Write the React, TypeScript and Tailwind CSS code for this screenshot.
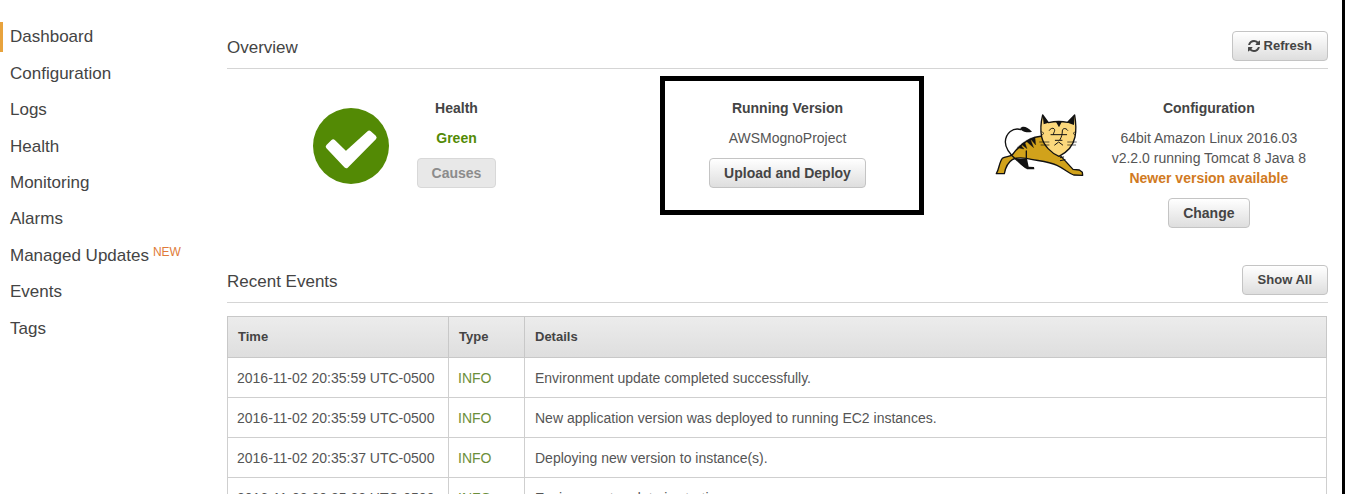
import type { ReactNode } from "react";

const navItems = [
  { label: "Dashboard", active: true },
  { label: "Configuration" },
  { label: "Logs" },
  { label: "Health" },
  { label: "Monitoring" },
  { label: "Alarms" },
  { label: "Managed Updates", isNew: true },
  { label: "Events" },
  { label: "Tags" },
];

const events = [
  { time: "2016-11-02 20:35:59 UTC-0500", type: "INFO", details: "Environment update completed successfully." },
  { time: "2016-11-02 20:35:59 UTC-0500", type: "INFO", details: "New application version was deployed to running EC2 instances." },
  { time: "2016-11-02 20:35:37 UTC-0500", type: "INFO", details: "Deploying new version to instance(s)." },
  { time: "2016-11-02 20:35:32 UTC-0500", type: "INFO", details: "Environment update is starting." },
];

function Button({ children, disabled, compact }: { children: ReactNode; disabled?: boolean; compact?: boolean }) {
  return (
    <button
      type="button"
      disabled={disabled}
      className={`flex h-[30px] items-center gap-1 rounded border border-[#c4c4c4] bg-linear-to-b from-white to-[#dedede] font-bold text-[#444] disabled:border-[#d8d8d8] disabled:bg-[#e8e8e8] disabled:bg-none disabled:text-[#8c8c8c] ${
        compact ? "px-[15px] text-[13px]" : "px-3.5 text-sm"
      }`}
    >
      {children}
    </button>
  );
}

function RefreshIcon() {
  return (
    <svg viewBox="0 0 1536 1536" className="size-3" fill="currentColor" aria-hidden="true">
      <path d="M1511 928q0 5-1 7-64 268-268 434.5t-478 166.5q-146 0-282.5-55t-243.5-157l-129 129q-19 19-45 19t-45-19-19-45v-448q0-26 19-45t45-19h448q26 0 45 19t19 45-19 45l-137 137q71 66 161 102t187 36q134 0 250-65t186-179q11-17 53-117 8-23 30-23h192q13 0 22.5 9.5t9.5 22.5zm25-800v448q0 26-19 45t-45 19h-448q-26 0-45-19t-19-45 19-45l138-138q-148-137-349-137-134 0-250 65t-186 179q-11 17-53 117-8 23-30 23h-199q-13 0-22.5-9.5t-9.5-22.5v-7q65-268 270-434.5t480-166.5q146 0 284 55.5t245 156.5l130-129q19-19 45-19t45 19 19 45z" />
    </svg>
  );
}

function HealthIcon() {
  return (
    <svg viewBox="0 0 226 226" className="size-[76px] shrink-0" aria-hidden="true">
      <circle cx="113" cy="113" r="113" fill="#538a05" />
      <path
        d="M45 115 L60 100 L98 137 L167 74 L182 88 L99 172 Z"
        fill="#fff"
        stroke="#fff"
        strokeWidth="14"
        strokeLinejoin="round"
      />
    </svg>
  );
}

function TomcatLogo() {
  return (
    <svg viewBox="30 40 267 189" className="h-[63px] w-[89px] shrink-0" fill="none" strokeLinecap="round" strokeLinejoin="round" aria-hidden="true">
      <path
        d="M172 109 C132 112 104 136 84 163 C76 174 62 168 52 176 C42 188 43 208 34 222 L58 222 C61 206 66 190 82 180 C92 174 110 174 124 176 C158 184 188 184 216 197 C238 207 250 220 266 226 L293 227 L292 218 L283 211 L264 209 L240 183 L226 168 L180 130 Z"
        fill="#d1a21b"
        stroke="#111"
        strokeWidth="4"
      />
      <path d="M92 177 L126 177 L131 201 L147 202 L148 209 L126 209 L108 194 Z" fill="#111" />
      <path d="M124 176 L124 154" stroke="#111" strokeWidth="4" />
      <path d="M123 124 L146 144 L136 118 Z M136 117 L152 136 L150 113 Z M97 144 L117 148 L107 136 Z M109 134 L126 147 L119 127 Z" fill="#111" stroke="#111" strokeWidth="1" />
      <path d="M226 183 L240 180 M226 174 L236 172" stroke="#111" strokeWidth="3" />
      <path d="M108 90 C84 82 62 101 61 127 C61 149 76 165 94 180 C102 188 110 196 122 204" stroke="#111" strokeWidth="4" />
      <path d="M106 86 C112 78 126 80 141 96 C130 100 110 99 106 86 Z" fill="#111" />
      <path
        d="M173 46 L190 69 C208 65 232 65 248 68 L269 46 C273 70 275 88 270 112 C264 140 246 158 222 170 C198 160 176 138 170 112 C165 88 168 66 173 46 Z"
        fill="#fbd87c"
        stroke="#111"
        strokeWidth="4"
      />
      <path d="M173 46 L190 69 L176 74 Z M269 46 L248 69 L267 76 Z M213 67 L230 67 L222 83 Z" fill="#111" />
      <path d="M170 96 L177 101 L171 106 M271 96 L264 101 L270 106" stroke="#111" strokeWidth="2" />
      <path
        d="M193 92 C198 83 209 84 209 92 C209 98 203 101 206 105 M248 92 C242 83 232 86 232 94 C232 102 230 112 225 120 M198 105 H245 M211 122 H231 M209 136 L221 127 L233 136"
        stroke="#111"
        strokeWidth="3"
      />
      <path d="M164 127 H192 M168 136 H192 M248 127 H274 M248 136 H272" stroke="#111" strokeWidth="2" />
    </svg>
  );
}

function SectionHeader({ title, action }: { title: string; action: ReactNode }) {
  return (
    <header className="flex items-end justify-between border-b border-[#d5d5d5] pb-[7px]">
      <h2 className="text-[17px] leading-[27px]">{title}</h2>
      {action}
    </header>
  );
}

export default function App() {
  return (
    <div className="flex h-screen overflow-hidden border-r-3 border-black bg-white font-['Liberation_Sans',Arial,sans-serif] text-[#444]">
      <nav aria-label="Environment" className="w-[227px] shrink-0 pt-[19px]">
        <ul className="grid h-[328px] auto-rows-fr">
          {navItems.map((item) => (
            <li key={item.label} className="flex items-center">
              <a
                href="#"
                className={
                  item.active
                    ? "border-l-3 border-[#e8a33d] pl-[7px] text-[17px] leading-[30px]"
                    : "pl-2.5 text-[17px] leading-[30px]"
                }
              >
                {item.label}
              </a>
              {item.isNew && <span className="pb-2 pl-1 text-xs text-[#e07b39]">NEW</span>}
            </li>
          ))}
        </ul>
      </nav>

      <main className="min-w-0 grow pt-[31px] pr-3.5">
        <SectionHeader
          title="Overview"
          action={
            <Button compact>
              <RefreshIcon />
              Refresh
            </Button>
          }
        />
        <div className="grid grid-cols-3 text-center text-sm leading-5">
          <section className="flex items-start justify-center pt-[29px] pr-3">
            <div className="pt-2.5">
              <HealthIcon />
            </div>
            <div className="ml-7 flex flex-col items-center">
              <h3 className="font-bold">Health</h3>
              <p className="mt-2.5 mb-2.5 font-bold text-[#538a05]">Green</p>
              <Button disabled>Causes</Button>
            </div>
          </section>

          <section className="flex items-start justify-center pt-[7px] pl-7">
            <div className="flex w-[264px] flex-col items-center border-5 border-black pt-[17px] pr-2 pb-[22px]">
              <h3 className="font-bold">Running Version</h3>
              <p className="mt-2.5 mb-2.5 text-[#555]">AWSMognoProject</p>
              <Button>Upload and Deploy</Button>
            </div>
          </section>

          <section className="flex items-start justify-end pt-[29px] pr-[22px]">
            <div className="pt-[15px]">
              <TomcatLogo />
            </div>
            <div className="ml-7 flex flex-col items-center">
              <h3 className="font-bold">Configuration</h3>
              <p className="mt-2.5 text-[#555]">64bit Amazon Linux 2016.03</p>
              <p className="text-[#555]">v2.2.0 running Tomcat 8 Java 8</p>
              <p className="mb-2.5 font-bold text-[#d17a22]">Newer version available</p>
              <Button>Change</Button>
            </div>
          </section>
        </div>

        <div className="mt-[37px]">
          <SectionHeader title="Recent Events" action={<Button compact>Show All</Button>} />
        </div>
        <div className="mt-[13px] pr-px">
          <table className="w-full table-fixed border-collapse text-left text-sm text-[#555]">
            <colgroup>
              <col className="w-[221px]" />
              <col className="w-[76px]" />
              <col />
            </colgroup>
            <thead>
              <tr className="h-[41px] bg-linear-to-b from-[#ececec] to-[#dedede] text-[13px] text-[#444]">
                <th className="border border-[#c8c8c8] px-2.5 font-bold">Time</th>
                <th className="border border-[#c8c8c8] px-2.5 font-bold">Type</th>
                <th className="border border-[#c8c8c8] px-2.5 font-bold">Details</th>
              </tr>
            </thead>
            <tbody>
              {events.map((event, i) => (
                <tr key={i} className="h-10">
                  <td className="border border-[#cfcfcf] pl-[9px] whitespace-nowrap">{event.time}</td>
                  <td className="border border-[#cfcfcf] pl-[9px] text-[#6b8e3a]">{event.type}</td>
                  <td className="border border-[#cfcfcf] pl-2.5">{event.details}</td>
                </tr>
              ))}
            </tbody>
          </table>
        </div>
      </main>
    </div>
  );
}
